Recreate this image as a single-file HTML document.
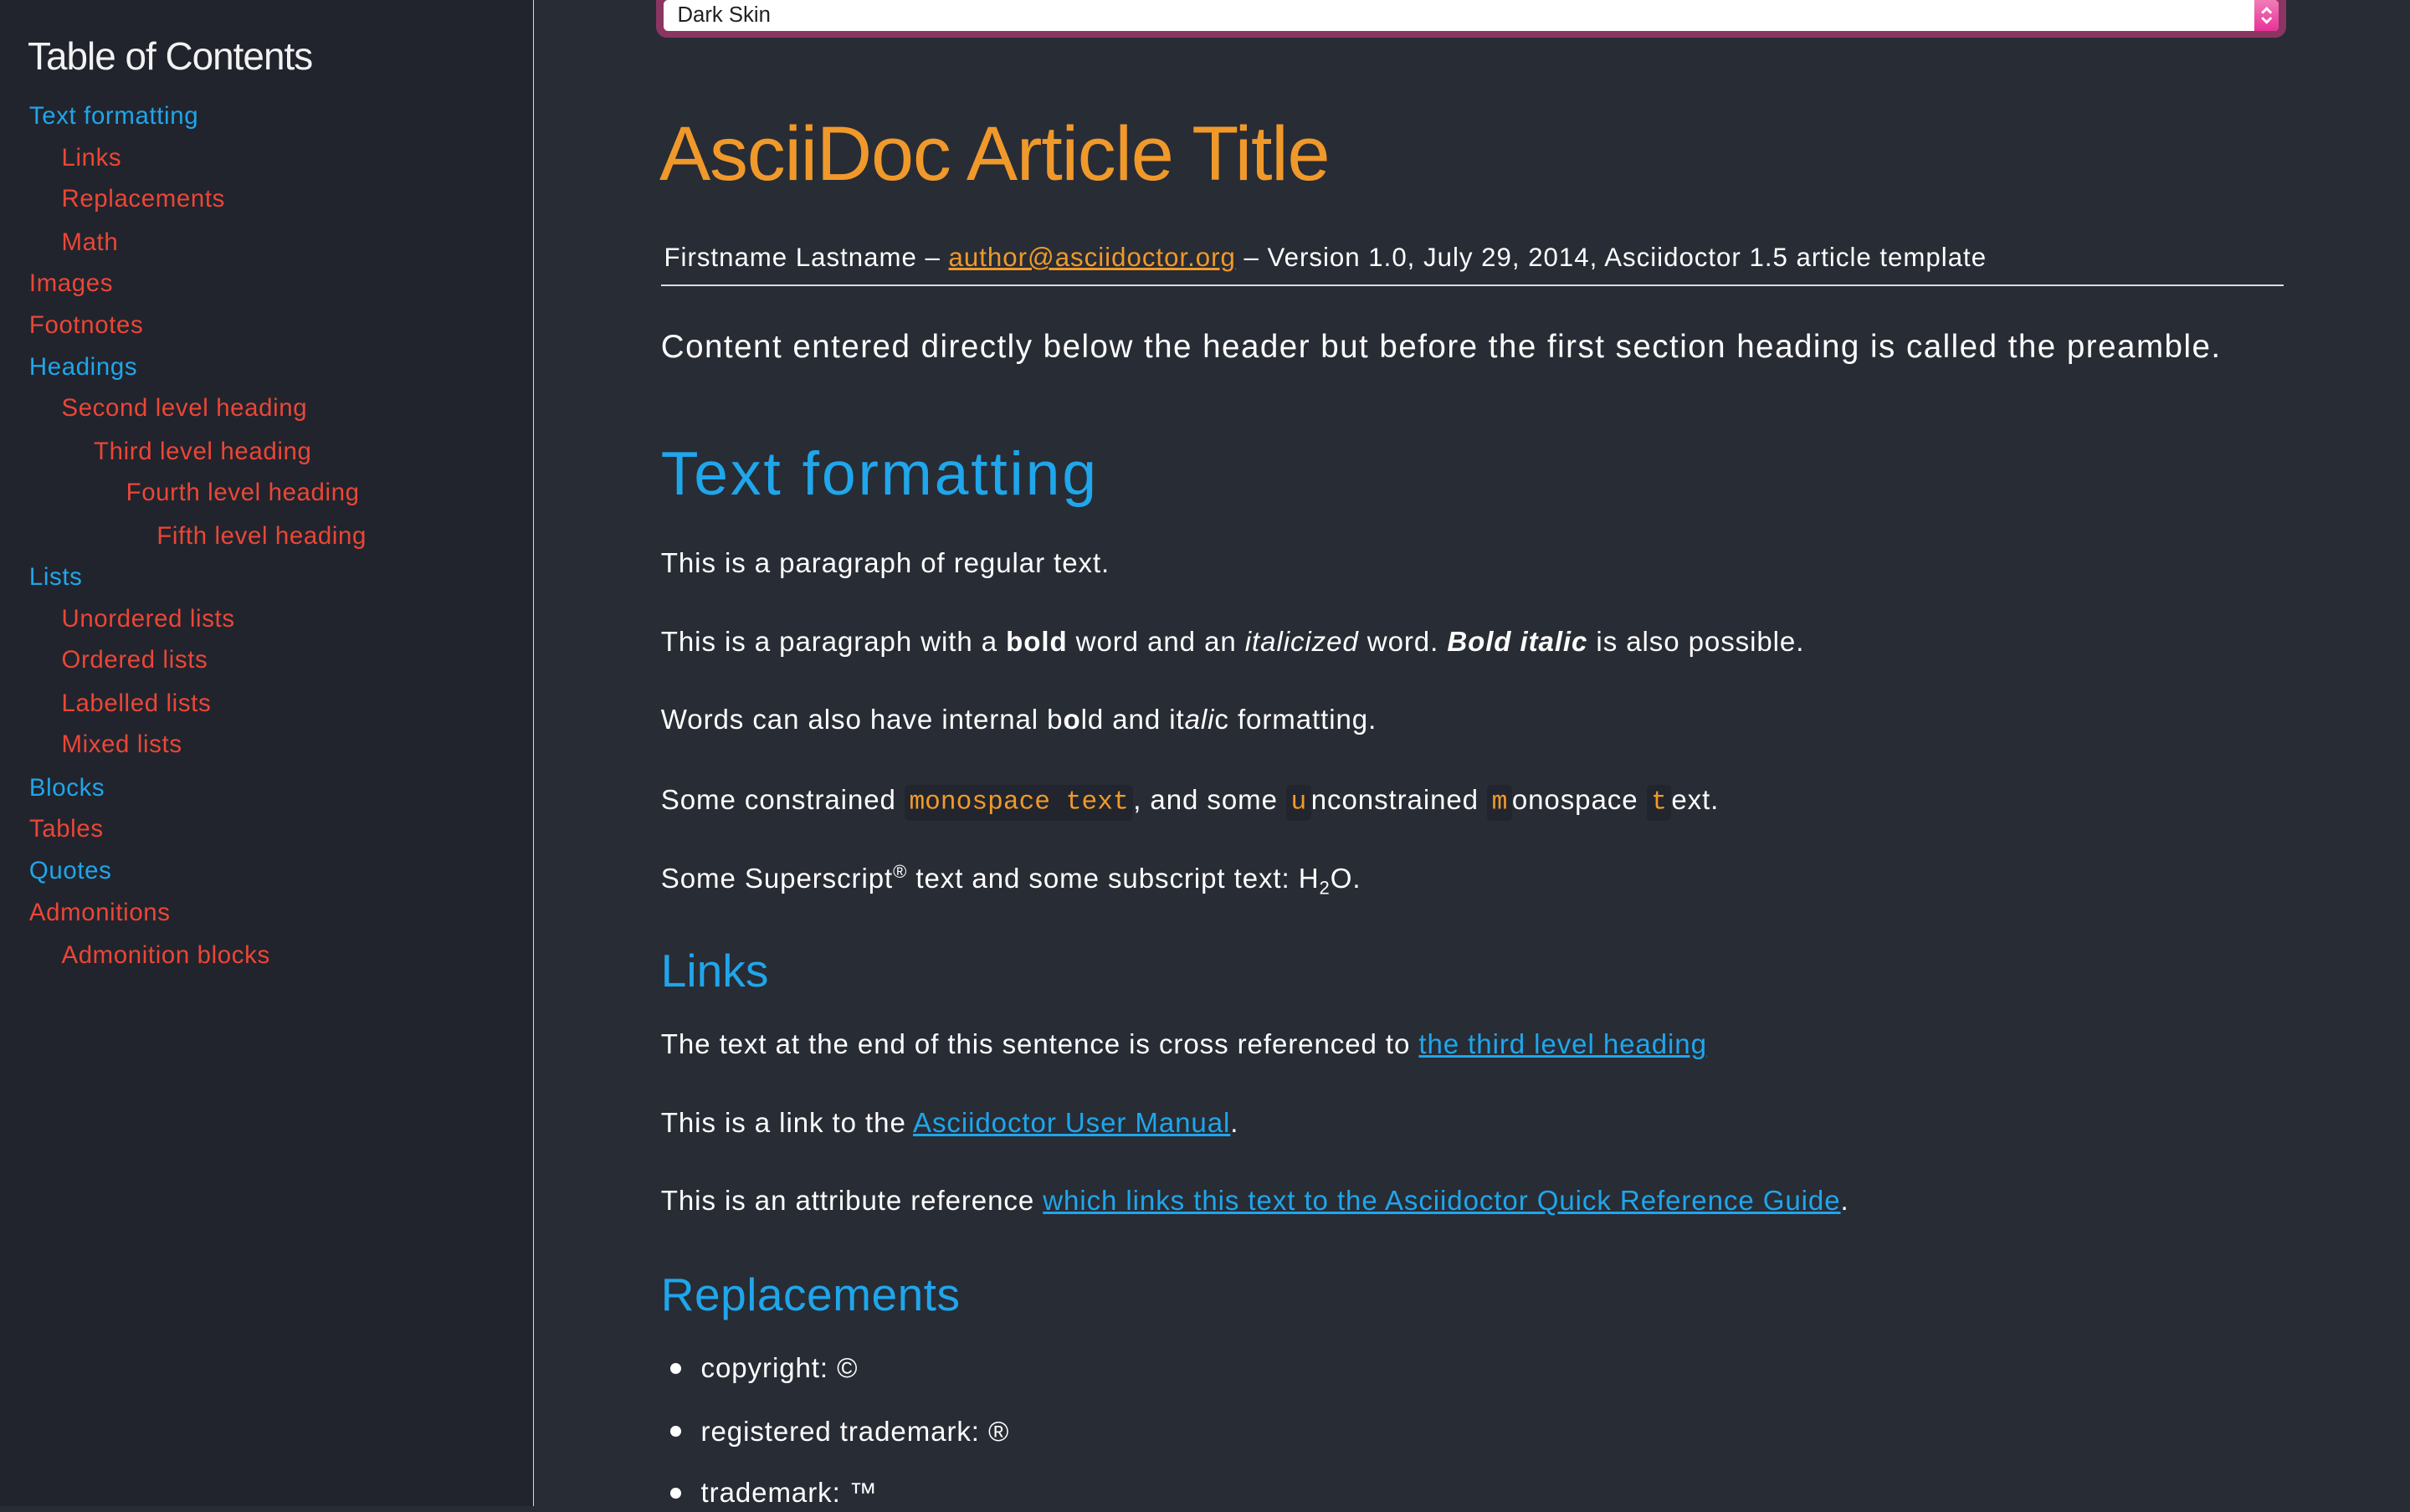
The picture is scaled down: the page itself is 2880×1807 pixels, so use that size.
<!DOCTYPE html>
<html><head><meta charset="utf-8"><style>
html,body{margin:0;padding:0;}
body{width:1568px;height:980px;overflow:hidden;zoom:1.83673;background:#282c35;font-family:"Liberation Sans",sans-serif;color:#fff;position:relative;}
.side{position:absolute;left:0;top:0;width:347px;height:980px;background:#21242d;border-right:1px solid #d8d8d8;}
.t{position:absolute;white-space:nowrap;}
.toc{font-size:16px;line-height:20px;letter-spacing:0.35px;}
.b{color:#1fa6eb}.r{color:#ec4636}
.p{font-size:18px;line-height:24px;left:430px;letter-spacing:0.5px;}
code{font-family:"Liberation Mono",monospace;color:#f09a2a;background:#22252d;border-radius:3px;padding:2px 3px;font-size:17px;letter-spacing:0;}
sup,sub{line-height:0;font-size:12px;}
a{color:#1fa6eb;text-decoration:underline;}
.sel{position:absolute;left:427px;top:-4px;width:1055px;height:26px;border:3px solid #8b3563;border-top:none;border-radius:0 0 7px 7px;background:#8b3563;}
.seli{position:absolute;left:2px;top:4px;right:2px;bottom:2px;background:#fff;border-radius:3px;color:#222;font-size:14px;line-height:20px;padding-left:9px;}
.arr{position:absolute;right:0;top:0;width:16px;height:100%;background:linear-gradient(#f07cb8,#e8329a);border-radius:0 3px 3px 0;}
</style></head><body>
<div class="side"></div>
<div class="t" style="left:18px;top:22px;font-size:25px;line-height:30px;color:#f2f2f2;letter-spacing:-0.55px">Table of Contents</div>
<div class="t toc b" style="left:19px;top:66px">Text formatting</div>
<div class="t toc r" style="left:40px;top:93px">Links</div>
<div class="t toc r" style="left:40px;top:120px">Replacements</div>
<div class="t toc r" style="left:40px;top:148px">Math</div>
<div class="t toc r" style="left:19px;top:175px">Images</div>
<div class="t toc r" style="left:19px;top:202px">Footnotes</div>
<div class="t toc b" style="left:19px;top:229px">Headings</div>
<div class="t toc r" style="left:40px;top:256px">Second level heading</div>
<div class="t toc r" style="left:61px;top:284px">Third level heading</div>
<div class="t toc r" style="left:82px;top:311px">Fourth level heading</div>
<div class="t toc r" style="left:102px;top:339px">Fifth level heading</div>
<div class="t toc b" style="left:19px;top:366px">Lists</div>
<div class="t toc r" style="left:40px;top:393px">Unordered lists</div>
<div class="t toc r" style="left:40px;top:420px">Ordered lists</div>
<div class="t toc r" style="left:40px;top:448px">Labelled lists</div>
<div class="t toc r" style="left:40px;top:475px">Mixed lists</div>
<div class="t toc b" style="left:19px;top:503px">Blocks</div>
<div class="t toc r" style="left:19px;top:530px">Tables</div>
<div class="t toc b" style="left:19px;top:557px">Quotes</div>
<div class="t toc r" style="left:19px;top:584px">Admonitions</div>
<div class="t toc r" style="left:40px;top:612px">Admonition blocks</div>

<div class="sel"><div class="seli">Dark Skin<div class="arr"><svg width="16" height="20" viewBox="0 0 16 20"><path d="M5 8.5L8 5.5L11 8.5M5 11.5L8 14.5L11 11.5" stroke="#fff" stroke-width="1.6" fill="none"/></svg></div></div></div>

<div class="t" style="left:429px;top:70px;font-size:50px;line-height:60px;color:#f0992a;letter-spacing:-0.65px">AsciiDoc Article Title</div>
<div class="t" style="left:432px;top:157px;font-size:17px;line-height:22px;letter-spacing:0.54px">Firstname Lastname – <a style="color:#f0992a">author@asciidoctor.org</a> – Version 1.0, July 29, 2014, Asciidoctor 1.5 article template</div>
<div style="position:absolute;left:430px;top:185px;width:1056px;height:1px;background:#ddd"></div>
<div class="t" style="left:430px;top:212px;font-size:21px;line-height:28px;letter-spacing:0.8px">Content entered directly below the header but before the first section heading is called the preamble.</div>
<div class="t b" style="left:430px;top:283px;font-size:40px;line-height:50px;letter-spacing:1.5px">Text formatting</div>
<div class="t p" style="top:355px">This is a paragraph of regular text.</div>
<div class="t p" style="top:406px">This is a paragraph with a <b>bold</b> word and an <i>italicized</i> word. <b><i>Bold italic</i></b> is also possible.</div>
<div class="t p" style="top:457px">Words can also have internal b<b>o</b>ld and it<i>ali</i>c formatting.</div>
<div class="t p" style="top:509px">Some constrained <code>monospace text</code>, and some <code>u</code>nconstrained <code>m</code>onospace <code>t</code>ext.</div>
<div class="t p" style="top:560px">Some Superscript<sup>®</sup> text and some subscript text: H<sub>2</sub>O.</div>
<div class="t b" style="left:430px;top:613px;font-size:30px;line-height:38px;letter-spacing:0px">Links</div>
<div class="t p" style="top:668px">The text at the end of this sentence is cross referenced to <a>the third level heading</a></div>
<div class="t p" style="top:719px">This is a link to the <a>Asciidoctor User Manual</a>.</div>
<div class="t p" style="top:770px">This is an attribute reference <a>which links this text to the Asciidoctor Quick Reference Guide</a>.</div>
<div class="t b" style="left:430px;top:824px;font-size:30px;line-height:38px;letter-spacing:0.25px">Replacements</div>
<div style="position:absolute;left:436px;top:887px;width:7px;height:7px;border-radius:50%;background:#fff"></div>
<div style="position:absolute;left:436px;top:928px;width:7px;height:7px;border-radius:50%;background:#fff"></div>
<div style="position:absolute;left:436px;top:968px;width:7px;height:7px;border-radius:50%;background:#fff"></div>
<div class="t p" style="left:456px;top:879px">copyright: ©</div>
<div class="t p" style="left:456px;top:920px">registered trademark: ®</div>
<div class="t p" style="left:456px;top:960px">trademark: ™</div>
</body></html>
